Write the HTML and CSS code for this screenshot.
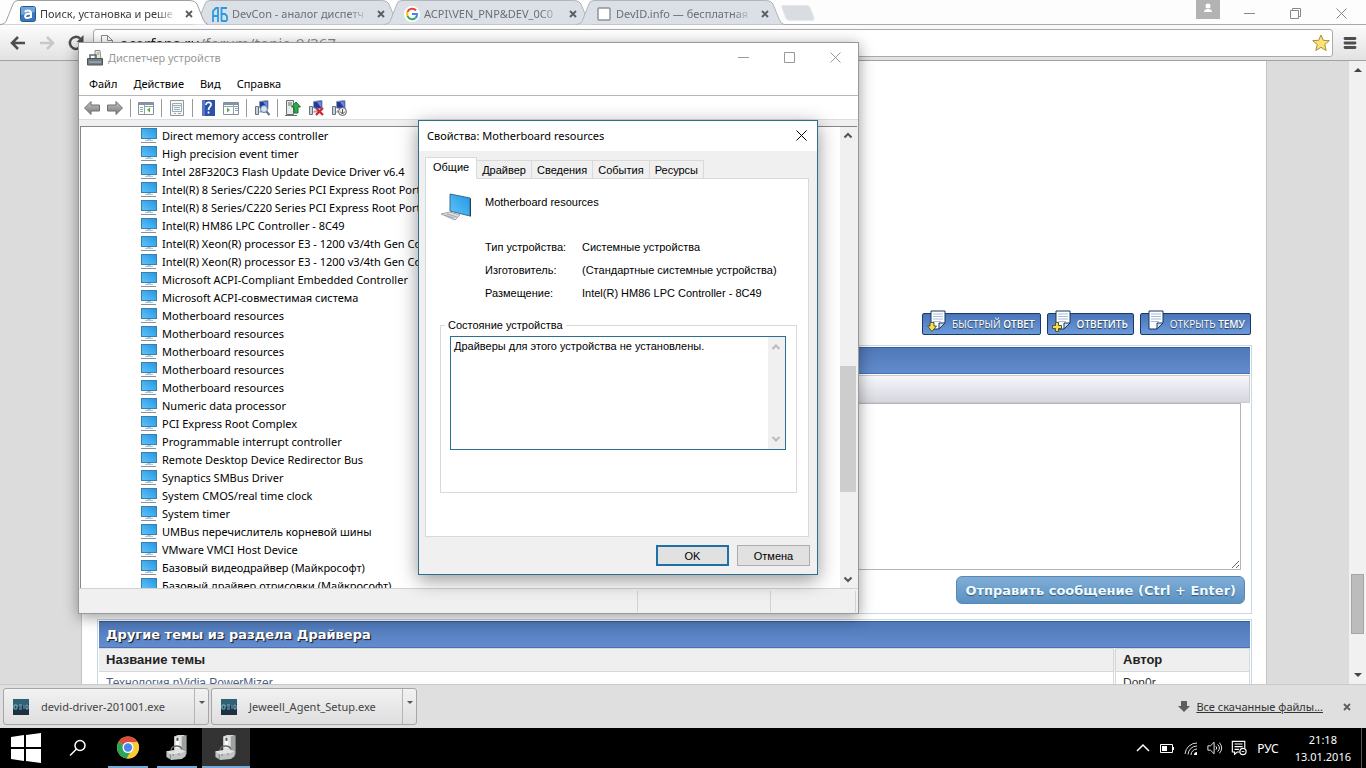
FILE: index.html
```html
<!DOCTYPE html>
<html lang="ru">
<head>
<meta charset="utf-8">
<title>Диспетчер устройств</title>
<link rel="stylesheet" href="styles.css">
</head>
<body>
<svg class="sprite" aria-hidden="true">
  <defs>
    <linearGradient id="screen" x1="0" y1="1" x2="1" y2="0"><stop offset="0" stop-color="#62c4fb"/><stop offset="1" stop-color="#2196e3"/></linearGradient>
    <linearGradient id="grayarrow" x1="0" y1="0" x2="0" y2="1"><stop offset="0" stop-color="#c4c4c4"/><stop offset="1" stop-color="#777"/></linearGradient>
  </defs>
  <symbol id="monitor" viewBox="0 0 16 16"><rect x=".5" y="1.5" width="15" height="10" fill="url(#screen)" stroke="#3f7fa6"/><path d="M6 12.5h4M4 13.5h8" stroke="#a9c9dc"/><path d="M0 15.5h15" stroke="#8d8f96"/></symbol>
  <symbol id="tabshape" viewBox="0 0 208 25" preserveAspectRatio="none"><path d="M0 24.5C5 24 6 22 7 19L13 4Q14 .5 18 .5H190Q195 .5 197 4L203 19Q205 24 208 24.5"/></symbol>
  <symbol id="cross" viewBox="0 0 8 8"><path d="M1 1l6 6M7 1L1 7" stroke="#5c5c5c" stroke-width="1.8"/></symbol>
  <symbol id="winclose" viewBox="0 0 11 11"><path d="M.5 .5l10 10M10.500 .5l-10 10" stroke="currentColor" fill="none"/></symbol>
  <symbol id="winmin" viewBox="0 0 11 11"><path d="M0 5.500h11" stroke="currentColor"/></symbol>
  <symbol id="pc" viewBox="0 0 16 16"><path d="M1.500 6.500h3v8h-3z" fill="#c9d3d8" stroke="#66727c"/><path d="M5.500 1.500l8.500-1V9l-8.500-1z" fill="#24389f" stroke="#8e99b5"/><path d="M9 2l4-.5v6z" fill="#6d86df"/><path d="M6 10.500h6v2H5z" fill="#98a3aa"/></symbol>
  <symbol id="devices" viewBox="0 0 24 26"><path d="M9 1.500L13 0h7v18H9z" fill="#d5d7d6"/><path d="M17 1.500L22 0v20l-5 3z" fill="#9da19f"/><path d="M10 2h6v16h-6z" fill="#e3e5e4"/><path d="M11 6h3v7h-3z" fill="#fff"/><path d="M11.500 3h2v3h-2z" fill="#555"/><path d="M6 16c0-6 10-6 11-1" fill="none" stroke="#666" stroke-width="1.500"/><path d="M1 17l14-2 6 2v5l-4 3-11 1-5-3z" fill="#bfc4c5"/><path d="M1 17l14-2 6 2-5 2-11 1z" fill="#e0e3e3"/><path d="M5 20v5M8 19.700v2M14 19v2" stroke="#7b8486" fill="none"/></symbol>
  <symbol id="page" viewBox="0 0 16 20"><path d="M1 1h14v12l-6 6H1z" fill="#fff" stroke="#12365f"/><path d="M3 4h10M3 6.500h10M3 9h10M3 11.500h8" stroke="#a4bdd4"/><path d="M9 19v-6h6z" fill="#cde1f5" stroke="#12365f"/></symbol>
  <symbol id="devid" viewBox="0 0 16 16"><rect width="16" height="16" fill="#1c3142"/><path d="M0 0h16v5L0 9z" fill="#2f6178"/><path d="M1 6h3v4H1zM6 6h3M6 8h3M6 10h3M11 6v4M13 6v4h2V6z" fill="none" stroke="#7fb0c6"/></symbol>
</svg>

<div class="desktop">
  <section class="browser">
    <header class="tabstrip">
      <div class="tabs">
        <div class="tab tab-active"><svg class="tab-bg"><use href="#tabshape"/></svg>
          <svg class="favicon" viewBox="0 0 16 16"><rect x=".5" y=".5" width="15" height="15" rx="2" fill="#3a76b8" stroke="#28588f"/><path d="M1 1h14v5L1 9z" fill="#6fa4d8"/><path d="M5 6c1-2 6-2 6 1v5M11 8c-7-1-7 4-4 4 2 0 4-1 4-2" fill="none" stroke="#fff" stroke-width="2"/></svg>
          <span class="tab-title">Поиск, установка и реше</span><button class="tab-close" aria-label="Закрыть"><svg><use href="#cross"/></svg></button></div>
        <div class="tab"><svg class="tab-bg"><use href="#tabshape"/></svg>
          <svg class="favicon" viewBox="0 0 16 16"><path d="M1 16V5l3-3h2v14M1 10h5M9.500 15V2H15M9 8h4l2 2v4l-1 1H9" fill="none" stroke="#2b9be0" stroke-width="1.800"/></svg>
          <span class="tab-title">DevCon - аналог диспетч</span><button class="tab-close" aria-label="Закрыть"><svg><use href="#cross"/></svg></button></div>
        <div class="tab"><svg class="tab-bg"><use href="#tabshape"/></svg>
          <svg class="favicon" viewBox="0 0 16 16"><circle cx="8" cy="8" r="8" fill="#fff"/><path d="M12 4.500A5 5 0 0 0 3.500 6" stroke="#ea4335" stroke-width="2" fill="none"/><path d="M3.500 6a5 5 0 0 0 0 4" stroke="#fbbc05" stroke-width="2" fill="none"/><path d="M3.500 10a5 5 0 0 0 8 2" stroke="#34a853" stroke-width="2" fill="none"/><path d="M11.500 12A5 5 0 0 0 13 8H8" stroke="#4285f4" stroke-width="2" fill="none"/></svg>
          <span class="tab-title">ACPI\VEN_PNP&amp;DEV_0C0</span><button class="tab-close" aria-label="Закрыть"><svg><use href="#cross"/></svg></button></div>
        <div class="tab"><svg class="tab-bg"><use href="#tabshape"/></svg>
          <svg class="favicon" viewBox="0 0 16 16"><rect x="2" y="2" width="12" height="12" rx="1" fill="#fff" stroke="#8f9399" stroke-width="1.500"/></svg>
          <span class="tab-title">DevID.info — бесплатная</span><button class="tab-close" aria-label="Закрыть"><svg><use href="#cross"/></svg></button></div>
        <button class="new-tab" aria-label="Новая вкладка"><svg viewBox="0 0 34 16"><path d="M2 .5h24q2 0 3 2l4 10q1 3-2 3H9q-3 0-4-2L1 3Q0 .5 2 .5z" fill="#d9dce1" stroke="#e7e9ec"/></svg></button>
      </div>
      <div class="chrome-controls">
        <button class="user" aria-label="Пользователь"><svg viewBox="0 0 24 19"><circle cx="12" cy="6" r="2.500" fill="#fff"/><path d="M8 12q0-3 4-3t4 3z" fill="#fff"/></svg></button>
        <button aria-label="Свернуть"><svg><use href="#winmin"/></svg></button>
        <button aria-label="Восстановить"><svg viewBox="0 0 11 11"><path d="M.5 2.500h8v8h-8zM2.500 2.500v-2h8v8h-2" fill="none" stroke="currentColor"/></svg></button>
        <button aria-label="Закрыть"><svg><use href="#winclose"/></svg></button>
      </div>
    </header>
    <div class="toolbar">
      <button aria-label="Назад"><svg viewBox="0 0 16 16"><path d="M15 8H2M8 2L2 8l6 6" fill="none" stroke="#4d4d4d" stroke-width="2.500"/></svg></button>
      <button aria-label="Вперёд"><svg viewBox="0 0 16 16"><path d="M1 8h13M8 2l6 6-6 6" fill="none" stroke="#c8c8c8" stroke-width="2.500"/></svg></button>
      <button aria-label="Обновить"><svg viewBox="0 0 16 16"><path d="M12 3.500A6 6 0 1 0 13.500 10" fill="none" stroke="#4d4d4d" stroke-width="2.500"/><path d="M15.500 0v7h-7z" fill="#4d4d4d"/></svg></button>
      <div class="omnibox">
        <svg class="doc" viewBox="0 0 12 16"><path d="M.5 .5h6l5 5v10H.5zM6.500 .5v5h5" fill="#fff" stroke="#8a8a8a"/></svg>
        <input type="text" aria-label="Адрес" value="acerfans.ru/forum/topic_9/367">
        <button class="star" aria-label="Закладка"><svg viewBox="0 0 18 18"><path d="M9 1l2.300 5.300 6 .4-4.600 3.800 1.500 6L9 13.300 3.800 16.500l1.500-6L.7 6.700l6-.4z" fill="#fbe27a" stroke="#ad8d35" stroke-linejoin="round"/></svg></button>
      </div>
      <button aria-label="Меню"><svg viewBox="0 0 16 16"><path d="M3 3.500h10M3 8h10M3 12.500h10" stroke="#4d4d4d" stroke-width="2.800" stroke-linecap="round"/></svg></button>
    </div>

    <div class="viewport">
      <main class="forum">
        <div class="post-actions">
          <button><svg class="sheet"><use href="#page"/></svg><svg class="mark" viewBox="0 0 10 10"><path d="M3 .5h4V4h2.500L5 9.500.5 4H3z" fill="#f5dc55" stroke="#54532b"/></svg><span>БЫСТРЫЙ <b>ОТВЕТ</b></span></button>
          <button><svg class="sheet"><use href="#page"/></svg><svg class="mark" viewBox="0 0 10 10"><path d="M3.500 .5h3v3h3v3h-3v3h-3v-3h-3v-3h3z" fill="#f5dc55" stroke="#54532b"/></svg><span><b>ОТВЕТИТЬ</b></span></button>
          <button><svg class="sheet"><use href="#page"/></svg><span>ОТКРЫТЬ <b>ТЕМУ</b></span></button>
        </div>
        <form class="panel reply">
          <div class="bar"></div>
          <div class="editor-tools"></div>
          <textarea aria-label="Сообщение"></textarea>
          <div class="submit-row"><button type="button">Отправить сообщение (Ctrl + Enter)</button></div>
        </form>
        <section class="panel">
          <h2 class="bar">Другие темы из раздела Драйвера</h2>
          <table>
            <thead><tr><th>Название темы</th><th class="author">Автор</th></tr></thead>
            <tbody><tr><td><a href="#t">Технология nVidia PowerMizer</a></td><td>Don0r</td></tr></tbody>
          </table>
        </section>
      </main>
      <div class="page-scroll"><svg viewBox="0 0 17 17"><path d="M5 11l4-4 4 4z" fill="#444"/></svg><i class="before"></i><i class="thumb"></i><i class="after"></i><svg viewBox="0 0 17 17"><path d="M5 6h8l-4 4z" fill="#444"/></svg></div>
    </div>

    <footer class="downloads">
      <div class="download"><button><svg><use href="#devid"/></svg>devid-driver-201001.exe</button><button class="more" aria-label="Ещё"></button></div>
      <div class="download"><button><svg><use href="#devid"/></svg>Jeweell_Agent_Setup.exe</button><button class="more" aria-label="Ещё"></button></div>
      <div class="all"><svg viewBox="0 0 12 12"><path d="M3 0h6v5h3l-6 6-6-6h3z" fill="#5e5e5e"/></svg><a href="#downloads">Все скачанные файлы...</a><button aria-label="Закрыть"><svg><use href="#cross"/></svg></button></div>
    </footer>
  </section>

  <section class="window manager">
    <header class="titlebar">
      <svg class="app" viewBox="0 0 16 16"><path d="M8 .5h5l1 9H8z" fill="#e4e6df" stroke="#8c8f88"/><path d="M10 2h2v3h-2z" fill="#b7c48b"/><path d="M3 8V5h6v3" fill="none" stroke="#5d6970" stroke-width="1.500"/><path d="M.5 8.500h15V15H.5z" fill="#6f7c84" stroke="#4b565c"/><path d="M2 12h12" stroke="#b8c1c5"/></svg>
      <h1>Диспетчер устройств</h1>
      <div class="win-controls"><button aria-label="Свернуть"><svg><use href="#winmin"/></svg></button><button aria-label="Развернуть"><svg viewBox="0 0 11 11"><path d="M.5 .5h10v10H.5z" fill="none" stroke="currentColor"/></svg></button><button aria-label="Закрыть"><svg><use href="#winclose"/></svg></button></div>
    </header>
    <nav class="menu"><button>Файл</button><button>Действие</button><button>Вид</button><button>Справка</button></nav>
    <div class="tools">
      <button aria-label="Назад"><svg viewBox="0 0 16 16"><path d="M.5 8L7 1.500V5h8.500v6H7v3.500z" fill="url(#grayarrow)" stroke="#707070"/></svg></button>
      <button aria-label="Вперёд"><svg viewBox="0 0 16 16"><path d="M15.500 8L9 1.500V5H.5v6H9v3.500z" fill="url(#grayarrow)" stroke="#707070"/></svg></button>
      <i></i>
      <button aria-label="Дерево"><svg viewBox="0 0 16 16"><path d="M.5 2.500h15v12H.5z" fill="#fff" stroke="#85929b"/><path d="M1 4h14" stroke="#8295a5" stroke-width="2"/><path d="M2 7.500h3M2 9.500h3M2 11.500h3M6.500 5v9M7 6.500h8" stroke="#91a5ae"/><path d="M12 7.500v5L9 10z" fill="#5fa845"/></svg></button>
      <i></i>
      <button aria-label="Свойства"><svg viewBox="0 0 16 16"><path d="M1.500 .5h13v15h-13z" fill="#f5f8f8" stroke="#8e979c"/><path d="M3.500 3.500h9v8h-9zM3.500 5.500h9M5 7.500h6M5 9.500h6M5 13.500h2M9 13.500h3" fill="none" stroke="#9aabb5"/></svg></button>
      <i></i>
      <button aria-label="Справка"><svg viewBox="0 0 16 16"><path d="M2 0h13v16H2z" fill="#2d50a8"/><path d="M2 0h3v16H2z" fill="#5878c6"/><path d="M6 5c0-4 6-3 5 0-.4 2-2.500 2-2.500 5M8.500 11.500v2" fill="none" stroke="#fff" stroke-width="1.700"/></svg></button>
      <button aria-label="Панель"><svg viewBox="0 0 16 16"><path d="M.5 2.500h15v12H.5z" fill="#fff" stroke="#85929b"/><path d="M1 4h14" stroke="#8295a5" stroke-width="2"/><path d="M10.500 5v9M1 6.500h14M12 8.500h3M12 10.500h3" stroke="#91a5ae"/><path d="M4 7.500v5L7 10z" fill="#5fa845"/></svg></button>
      <i></i>
      <button aria-label="Обновить конфигурацию"><svg viewBox="0 0 16 16"><use href="#pc"/><circle cx="10" cy="9" r="3.500" fill="#cfe5f5" stroke="#6d7f90"/><path d="M12.500 11.500l3 3.500" stroke="#58708a" stroke-width="2"/></svg></button>
      <i></i>
      <button aria-label="Обновить драйвер"><svg viewBox="0 0 16 16"><path d="M1.500 .5h7v14h-7z" fill="#e5ebe6" stroke="#66736b"/><path d="M3 3h4M3 5h4M0 15.500h12" stroke="#66736b"/><path d="M11 2l4.500 5h-2.500v6H9V7H6.500z" fill="#35a84b" stroke="#1a7230"/></svg></button>
      <button aria-label="Удалить"><svg viewBox="0 0 16 16"><use href="#pc"/><path d="M8 8l7 7M15 8l-7 7" stroke="#d22525" stroke-width="2.200"/></svg></button>
      <button aria-label="Отключить"><svg viewBox="0 0 16 16"><use href="#pc"/><circle cx="11.500" cy="11.500" r="4" fill="#eee" stroke="#666"/><path d="M11.500 9v5M9 11.500l2.500 2.500 2.500-2.500" stroke="#555" fill="none"/></svg></button>
    </div>
    <div class="tree">
      <ul>
        <li><svg><use href="#monitor"/></svg>Direct memory access controller</li>
        <li><svg><use href="#monitor"/></svg>High precision event timer</li>
        <li><svg><use href="#monitor"/></svg>Intel 28F320C3 Flash Update Device Driver v6.4</li>
        <li><svg><use href="#monitor"/></svg>Intel(R) 8 Series/C220 Series PCI Express Root Port</li>
        <li><svg><use href="#monitor"/></svg>Intel(R) 8 Series/C220 Series PCI Express Root Port</li>
        <li><svg><use href="#monitor"/></svg>Intel(R) HM86 LPC Controller - 8C49</li>
        <li><svg><use href="#monitor"/></svg>Intel(R) Xeon(R) processor E3 - 1200 v3/4th Gen Core</li>
        <li><svg><use href="#monitor"/></svg>Intel(R) Xeon(R) processor E3 - 1200 v3/4th Gen Core</li>
        <li><svg><use href="#monitor"/></svg>Microsoft ACPI-Compliant Embedded Controller</li>
        <li><svg><use href="#monitor"/></svg>Microsoft ACPI-совместимая система</li>
        <li><svg><use href="#monitor"/></svg>Motherboard resources</li>
        <li><svg><use href="#monitor"/></svg>Motherboard resources</li>
        <li><svg><use href="#monitor"/></svg>Motherboard resources</li>
        <li><svg><use href="#monitor"/></svg>Motherboard resources</li>
        <li><svg><use href="#monitor"/></svg>Motherboard resources</li>
        <li><svg><use href="#monitor"/></svg>Numeric data processor</li>
        <li><svg><use href="#monitor"/></svg>PCI Express Root Complex</li>
        <li><svg><use href="#monitor"/></svg>Programmable interrupt controller</li>
        <li><svg><use href="#monitor"/></svg>Remote Desktop Device Redirector Bus</li>
        <li><svg><use href="#monitor"/></svg>Synaptics SMBus Driver</li>
        <li><svg><use href="#monitor"/></svg>System CMOS/real time clock</li>
        <li><svg><use href="#monitor"/></svg>System timer</li>
        <li><svg><use href="#monitor"/></svg>UMBus перечислитель корневой шины</li>
        <li><svg><use href="#monitor"/></svg>VMware VMCI Host Device</li>
        <li><svg><use href="#monitor"/></svg>Базовый видеодрайвер (Майкрософт)</li>
        <li><svg><use href="#monitor"/></svg>Базовый драйвер отрисовки (Майкрософт)</li>
      </ul>
      <div class="tree-scroll"><svg viewBox="0 0 16 16"><path d="M4.500 10L8 6.500l3.500 3.500" fill="none" stroke="#555" stroke-width="2"/></svg><i class="before"></i><i class="thumb"></i><i class="after"></i><svg viewBox="0 0 16 16"><path d="M4.500 6L8 9.500 11.500 6" fill="none" stroke="#555" stroke-width="2"/></svg></div>
    </div>
    <div class="status"><span class="wide"></span><span class="mid"></span><span class="small"></span></div>
  </section>

  <section class="window dialog">
    <header class="dialog-title"><h2>Свойства: Motherboard resources</h2><button aria-label="Закрыть"><svg><use href="#winclose"/></svg></button></header>
    <div class="dialog-tabs"><button class="current">Общие</button><button>Драйвер</button><button>Сведения</button><button>События</button><button>Ресурсы</button></div>
    <div class="sheet-body">
      <div class="device"><svg viewBox="0 0 32 28"><path d="M10 1l20 4v18l-20-5z" fill="url(#screen)" stroke="#3a6a90"/><path d="M30 5l1 1v18l-1-1z" fill="#23405a"/><path d="M1 21l9-2 10 3-5 5z" fill="#dadce0" stroke="#a3a6ad"/><path d="M4 22l10 3M7 21l10 3" stroke="#a3a6ad"/></svg><strong>Motherboard resources</strong></div>
      <dl><dt>Тип устройства:</dt><dd>Системные устройства</dd><dt>Изготовитель:</dt><dd>(Стандартные системные устройства)</dd><dt>Размещение:</dt><dd>Intel(R) HM86 LPC Controller - 8C49</dd></dl>
      <fieldset><legend><label for="state">Состояние устройства</label></legend>
        <div class="state-box"><textarea id="state" readonly>Драйверы для этого устройства не установлены.</textarea><div class="state-scroll"><svg viewBox="0 0 16 16"><path d="M4.500 10L8 6.500l3.500 3.500" fill="none" stroke="#bbb" stroke-width="2"/></svg><svg viewBox="0 0 16 16"><path d="M4.500 6L8 9.500 11.500 6" fill="none" stroke="#bbb" stroke-width="2"/></svg></div></div>
      </fieldset>
    </div>
    <div class="dialog-actions"><button class="ok">OK</button><button>Отмена</button></div>
  </section>

  <footer class="taskbar">
    <button class="start" aria-label="Пуск"><svg viewBox="0 0 30 30"><path d="M0 4l13-2v12H0zM15 2L30 0v14H15zM0 16h13v12L0 26zM15 16h15v14l-15-2z" fill="#fff"/></svg></button>
    <button class="find" aria-label="Поиск"><svg viewBox="0 0 18 18"><circle cx="11" cy="6.500" r="5" fill="none" stroke="#fff" stroke-width="1.500"/><path d="M7.500 10L1 16.500" stroke="#fff" stroke-width="1.500"/></svg></button>
    <button class="task" aria-label="Chrome"><svg viewBox="0 0 24 24"><circle cx="12" cy="12" r="11" fill="#f7cb35"/><path d="M12 12L2.500 6.500a11 11 0 0 1 19 0z" fill="#dd4b3e"/><path d="M12 12L2.500 6.500a11 11 0 0 0 8 16.400l5-8.400z" fill="#2aa457"/><path d="M12 6.500h9.500A11 11 0 0 1 11 23l5.500-9z" fill="#f7cb35"/><circle cx="12" cy="12" r="5.500" fill="#fff"/><circle cx="12" cy="12" r="4.200" fill="#4a87ee"/></svg></button>
    <button class="task" aria-label="Диспетчер устройств"><svg><use href="#devices"/></svg></button>
    <button class="task front" aria-label="Свойства"><svg><use href="#devices"/></svg></button>
    <div class="tray">
      <svg viewBox="0 0 16 16"><path d="M2 11l6-6 6 6" fill="none" stroke="#fff" stroke-width="1.500"/></svg>
      <svg viewBox="0 0 16 16"><path d="M1.500 4.500h12v8h-12zM14.500 7v3" fill="none" stroke="#fff"/><path d="M3 6h5v5H3z" fill="#fff"/></svg>
      <svg viewBox="0 0 16 16"><path d="M2 14A12 12 0 0 1 14 3M5 14.500A9 9 0 0 1 14 6M8 15a6 6 0 0 1 6-6" fill="none" stroke="#ddd"/><path d="M11 15a3 3 0 0 1 3-3v3z" fill="#fff"/></svg>
      <svg viewBox="0 0 18 16"><path d="M1 5.500h3l4-4v13l-4-4H1zM10 6q2 2 0 4M12 4q4 4 0 8M14 2q5 6 0 12" fill="none" stroke="#fff"/></svg>
      <svg viewBox="0 0 18 18"><path d="M15.500 9V1.500h-14v12H4V16l3-2.500h3M4 4.500h9M4 7.500h9M4 10.500h5" fill="none" stroke="#fff" stroke-width="1.300"/><circle cx="13.500" cy="13" r="3.500" fill="#000" stroke="#fff" stroke-width="1.300"/><path d="M12 13h3" stroke="#fff"/></svg>
      <span class="lang">РУС</span>
      <time><span>21:18</span><span>13.01.2016</span></time>
    </div>
  </footer>
</div>
</body>
</html>
```
FILE: styles.css
```css
* { box-sizing: border-box; }
body { margin: 0; font-family: "Noto Sans", "Open Sans", sans-serif; font-size: 11px; color: #000; }
button { font: inherit; color: inherit; border: 0; background: none; padding: 0; display: flex; align-items: center; justify-content: center; }
svg { display: block; flex: none; }
h1, h2 { margin: 0; font-size: 11px; font-weight: 400; }
.sprite { position: absolute; width: 0; height: 0; }
.desktop { position: relative; display: flex; flex-direction: column; height: 100vh; overflow: hidden; }
.browser { flex: 1; min-height: 0; display: flex; flex-direction: column; background: #dcdcdc; }

/* Tab strip */
.tabstrip { display: flex; justify-content: space-between; height: 25px; background: #fdfdfd; border-bottom: 1px solid #a9a9a9; flex: none; }
.tabs { display: flex; height: 25px; }
.tab { position: relative; display: flex; align-items: center; width: 208px; height: 25px; margin-right: -16px; padding: 2px 11px 0 20px; gap: 4px; color: #6b6e73; }
.tab-bg { position: absolute; inset: 0; width: 208px; height: 25px; fill: #dbdfe6; stroke: #b3b5b8; }
.tab-active { z-index: 1; color: #3c3c3c; }
.tab-active .tab-bg { fill: #fff; stroke: #a0a0a0; }
.favicon { position: relative; width: 16px; height: 16px; }
.tab-title { position: relative; flex: 1; white-space: nowrap; mask-image: linear-gradient(90deg, #000 85%, transparent); }
.tab-close { position: relative; width: 16px; height: 16px; }
.tab-close svg { width: 8px; height: 8px; }
.new-tab { align-self: flex-start; margin: 5px 0 0 13px; }
.new-tab svg { width: 34px; height: 16px; }
.chrome-controls { display: flex; align-items: flex-start; color: #888; padding-right: 2px; }
.chrome-controls button { width: 46px; height: 26px; }
.chrome-controls svg { width: 11px; height: 11px; }
.chrome-controls .user { width: 24px; height: 19px; background: #b3b3b3; margin-right: 6px; }
.chrome-controls .user svg { width: 24px; height: 19px; }

.toolbar { display: flex; align-items: center; height: 36px; flex: none; padding: 0 8px 0 10px; gap: 13px; background: linear-gradient(#fcfcfc, #e2e2e2); border-bottom: 1px solid #a2a2a2; }
.toolbar > button svg { width: 16px; height: 16px; }
.omnibox { flex: 1; display: flex; align-items: center; height: 28px; margin: 0 -4px; padding: 0 2px 0 7px; gap: 7px; background: #fff; border: 1px solid #aaa; border-radius: 3px; }
.doc { width: 12px; height: 16px; }
.omnibox input { flex: 1; border: 0; outline: 0; padding: 0; font: 15px "Noto Sans", sans-serif; color: transparent; background: linear-gradient(90deg, #222 82px, #888 82px); background-clip: text; }
.star svg { width: 18px; height: 18px; }

/* Forum page */
.viewport { flex: 1; min-height: 0; display: flex; overflow: hidden; }
.forum { flex: 1; min-width: 0; margin: 0 82px 0 81px; padding: 249px 14px 0 15px; background: #fff; border: solid #c3c3c3; border-width: 0 1px; overflow: hidden; }
.post-actions { display: flex; justify-content: flex-end; gap: 6px; height: 35px; padding-right: 1px; }
.post-actions button { position: relative; height: 22px; margin-top: 3px; padding: 0 5px 0 29px; color: #fff; font: 10px "Open Sans", sans-serif; background: linear-gradient(#4a74b8, #6b9adb); border: 1px solid #173a6b; border-radius: 2px; text-shadow: 0 1px 1px #234; }
.post-actions b { font-weight: 600; }
.sheet { position: absolute; left: 7px; top: -4px; width: 16px; height: 20px; }
.mark { position: absolute; left: 4px; top: 8px; width: 10px; height: 10px; }
.panel { border: 1px solid #c9d9e3; padding: 1px; margin-bottom: 5px; }
.bar { height: 27px; background: linear-gradient(#4f78b8, #628ccd); border-top: 1px solid #385c94; border-bottom: 1px solid #4a72b0; color: #fff; font: bold 13px/26px "DejaVu Sans", sans-serif; padding-left: 7px; text-shadow: 1px 1px 1px #112; }
.editor-tools { height: 28px; margin-top: 1px; background: linear-gradient(#f6f6fb, #d6d6df); border: 1px solid #ccc; }
.reply textarea { display: block; width: calc(100% - 9px); height: 167px; margin: 0; border: 1px solid #b5b5b5; background: #fff; }
.submit-row { display: flex; justify-content: flex-end; padding: 6px 5px 8px; }
.submit-row button { height: 28px; padding: 0 8px; color: #f0fbff; font: bold 13px "DejaVu Sans", sans-serif; border: 1px solid #5688b4; border-radius: 6px; background: linear-gradient(#80add7, #5b92c2); text-shadow: 0 1px 1px #357; }
table { width: 100%; border-collapse: collapse; font: 12px/22px "Liberation Sans", sans-serif; color: #333; }
th { background: #efefef; text-align: left; font-size: 13px; color: #222; }
th, td { border: 1px solid #d5d9dc; border-left: 0; padding: 0 7px; }
.author { width: 135px; border-left: 3px double #d5d9dc; }
td a { color: #4d6385; text-decoration: none; }
td + td { border-left: 3px double #d5d9dc; }
.page-scroll { width: 17px; display: flex; flex-direction: column; background: #f1f1f1; }
.page-scroll svg { width: 17px; height: 17px; }
.page-scroll .before { flex: 498; }
.page-scroll .thumb { flex: 58; margin: 0 2px; background: #bcbcbc; border: 1px solid #a5a5a5; }
.page-scroll .after { flex: 33; }

/* Download shelf */
.downloads { display: flex; align-items: center; height: 44px; flex: none; padding: 0 13px 0 3px; gap: 2px; background: #dfdfdf; border-top: 1px solid #c9c9c9; color: #444; }
.download { display: flex; width: 206px; height: 37px; border: 1px solid #a6a6a6; border-radius: 3px; background: linear-gradient(#f2f2f2, #dedede); }
.download button:first-child { flex: 1; justify-content: flex-start; padding-left: 9px; gap: 12px; }
.download svg { width: 16px; height: 16px; }
.download .more { width: 14px; border-left: 1px solid #b5b5b5; align-items: flex-start; padding-top: 12px; }
.more::before { content: ""; border: 3px solid transparent; border-top-color: #555; }
.all { margin-left: auto; display: flex; align-items: center; gap: 6px; }
.all > svg { width: 12px; height: 12px; }
.all a { color: #333; }
.all button { margin-left: 12px; width: 12px; }
.all button svg { width: 8px; height: 8px; }

/* Windows */
.window { position: absolute; display: flex; flex-direction: column; background: #f0f0f0; }
.manager { left: 78px; top: 42px; width: 781px; height: 572px; border: 1px solid #999; box-shadow: 0 3px 14px rgba(0, 0, 0, .4); }
.titlebar { display: flex; align-items: center; height: 29px; padding-left: 8px; gap: 5px; background: #fff; color: #999; }
.titlebar h1 { flex: 1; }
.app { width: 16px; height: 16px; }
.win-controls { display: flex; }
.win-controls button { width: 46px; height: 29px; }
.win-controls svg { width: 11px; height: 11px; }
.menu { display: flex; height: 24px; padding-left: 10px; gap: 16px; background: #fff; border-bottom: 1px solid #b5b5b5; }
.tools { display: flex; align-items: center; height: 24px; padding: 1px 0 0 5px; gap: 7px; background: #fff; border-bottom: 1px solid #ddd; }
.tools svg { width: 16px; height: 16px; }
.tools i { width: 1px; height: 18px; background: #999; }
.tree { flex: 1; min-height: 0; display: flex; margin: 6px 1px 0; border: solid #828790; border-width: 1px 0 0 1px; background: #fff; }
.tree ul { flex: 1; margin: -1px 0 0; padding: 0 0 0 60px; list-style: none; overflow: hidden; }
.tree li { display: flex; align-items: center; gap: 5px; height: 18px; white-space: nowrap; }
.tree li svg { width: 16px; height: 16px; }
.tree-scroll { width: 17px; display: flex; flex-direction: column; background: #f0f0f0; }
.tree-scroll svg { width: 16px; height: 17px; }
.tree-scroll .before { flex: 221; }
.tree-scroll .thumb { flex: 126; background: #cdcdcd; margin-right: 1px; }
.tree-scroll .after { flex: 79; }
.status { display: flex; height: 25px; border-top: 1px solid #d2d2d2; padding: 2px 2px 1px 0; }
.status span { border-right: 1px solid #d2d2d2; }
.wide { flex: 1; }
.mid { width: 133px; }
.small { width: 85px; }

.dialog { left: 418px; top: 120px; width: 400px; height: 455px; border: 1px solid #2b708f; box-shadow: 0 5px 18px rgba(0, 0, 0, .42); font-family: "Liberation Sans", sans-serif; }
.dialog-title { display: flex; align-items: center; justify-content: space-between; height: 30px; padding: 0 10px 2px 8px; background: #fff; font-family: "Noto Sans", sans-serif; }
.dialog-title svg { width: 11px; height: 11px; }
.dialog-tabs { display: flex; align-items: flex-end; height: 28px; padding-left: 6px; margin-bottom: -1px; }
.dialog-tabs button { height: 19px; padding: 0 5px; border: 1px solid #d9d9d9; border-left: 0; }
.dialog-tabs .current { position: relative; height: 22px; padding: 0 7px 2px; background: #fff; border-left: 1px solid #d9d9d9; border-bottom-color: #fff; }
.sheet-body { flex: 1; margin: 0 8px 0 6px; padding: 14px 11px 0 14px; background: #fff; border: 1px solid #d9d9d9; }
.device { display: flex; gap: 13px; height: 42px; }
.device svg { width: 32px; height: 28px; }
.device strong { font-weight: 400; padding-top: 3px; }
dl { display: grid; grid-template-columns: 97px auto; grid-auto-rows: 23px; margin: 0 0 0 45px; align-items: center; }
dd { margin: 0; }
fieldset { margin: 15px 0 0; padding: 5px 10px 42px 9px; border: 1px solid #d9d9d9; }
legend { padding: 0 3px; margin-left: -5px; line-height: 12px; }
.state-box { display: flex; height: 114px; border: 1px solid #2a7090; }
.state-box textarea { flex: 1; border: 0; outline: 0; resize: none; padding: 3px; font: 11px "Liberation Sans", sans-serif; color: #000; overflow: hidden; }
.state-scroll { display: flex; flex-direction: column; justify-content: space-between; width: 17px; padding: 2px 0; background: #f0f0f0; }
.state-scroll svg { width: 16px; height: 16px; }
.dialog-actions { display: flex; justify-content: flex-end; gap: 8px; padding: 8px 7px; }
.dialog-actions button { width: 73px; height: 21px; background: #e1e1e1; border: 1px solid #adadad; }
.dialog-actions .ok { border: 2px solid #2070a5; }

/* Taskbar */
.taskbar { display: flex; height: 40px; flex: none; background: #000; color: #fff; }
.start { width: 52px; }
.start svg { width: 30px; height: 30px; }
.find { width: 52px; }
.find svg { width: 18px; height: 18px; }
.task { width: 40px; height: 40px; margin: 0 5px 0 4px; border-bottom: 2px solid #76a9d8; }
.task svg { width: 24px; height: 25px; }
.front { width: 48px; margin: 0; background: #333; }
.tray { display: flex; align-items: center; margin-left: auto; gap: 8px; margin-right: 4px; padding-right: 10px; border-right: 1px solid #555; }
.tray svg { width: 16px; height: 16px; }
.lang { margin-left: 2px; font-size: 12px; }
time { display: flex; flex-direction: column; align-items: center; margin-left: 8px; line-height: 17px; }
```
